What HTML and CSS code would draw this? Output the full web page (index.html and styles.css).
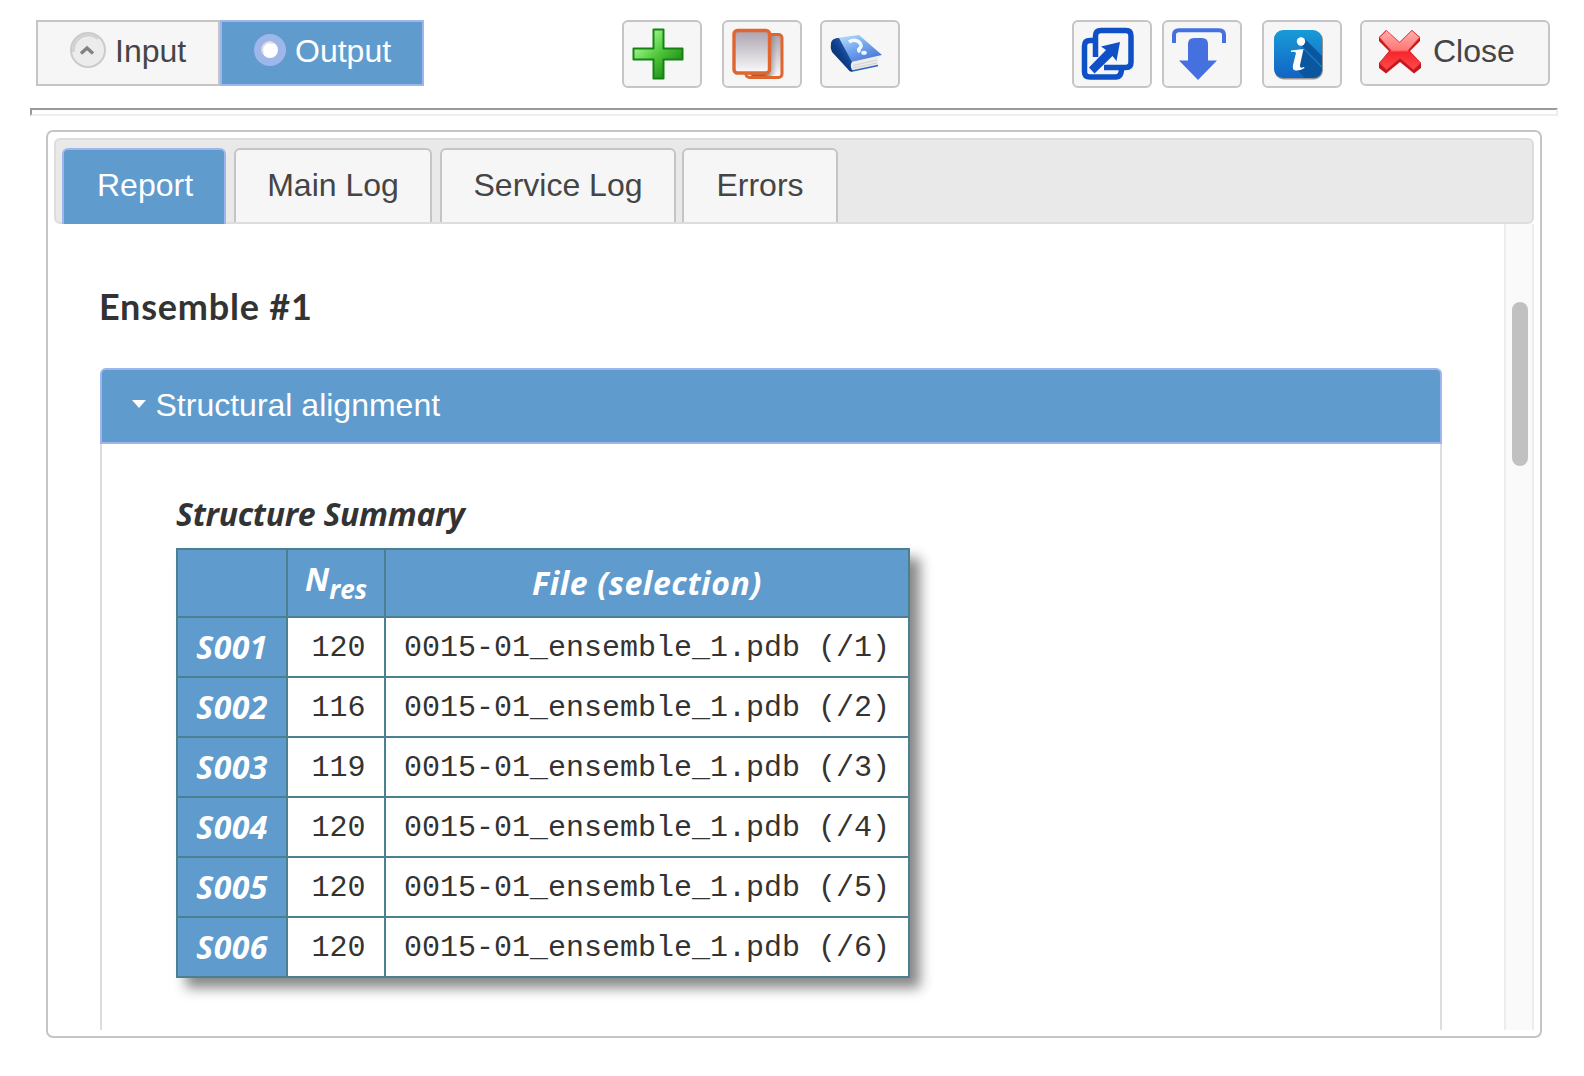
FILE: index.html
```html
<!DOCTYPE html>
<html lang="en">
<head>
<meta charset="utf-8">
<title>Job report</title>
<link rel="stylesheet" href="styles.css">
</head>
<body>
<header class="toolbar">
  <div class="switch">
    <button class="mode mode-input"><svg width="36" height="36" viewBox="0 0 36 36"><circle cx="18" cy="18" r="17" fill="#ececec" stroke="#cbcbcb" stroke-width="2"/><path d="M3.500 20A15 15 0 0 1 28 6.500" fill="none" stroke="#d2d2d2" stroke-width="3"/><path d="M11 21.500L17 16L23 21.500" fill="none" stroke="#828282" stroke-width="3.400"/></svg><span>Input</span></button>
    <button class="mode mode-output"><svg width="32" height="32" viewBox="0 0 32 32"><circle cx="16" cy="16" r="16" fill="#9fb6ea"/><circle cx="16" cy="16" r="8" fill="#fff"/><path d="M9 19A7.500 7.500 0 0 1 19 9" fill="none" stroke="#dedede" stroke-width="2"/></svg><span>Output</span></button>
  </div>
  <div class="group group-mid">
    <button class="tool"><svg width="76" height="64" viewBox="0 0 76 64"><defs><linearGradient id="plus" x1="0" y1="0" x2="1" y2="1"><stop offset=".15" stop-color="#a4ff92"/><stop offset=".5" stop-color="#50c63c"/><stop offset=".85" stop-color="#1b8a14"/></linearGradient></defs><path d="M29.500 7.500H39.500V26.500H58.500V37.500H39.500V56.500H29.500V37.500H9.500V26.500H29.500Z" fill="url(#plus)" stroke="#178114" stroke-width="2" stroke-linejoin="round"/></svg></button>
    <button class="tool"><svg width="76" height="64" viewBox="0 0 76 64"><defs><linearGradient id="sheet" x1="0" y1="0" x2="0" y2="1"><stop offset="0" stop-color="#aaa2ae"/><stop offset="1" stop-color="#fbfafc"/></linearGradient><linearGradient id="shade" x1="0" y1="0" x2="1" y2="0"><stop offset=".5" stop-color="#555" stop-opacity=".85"/><stop offset=".9" stop-color="#777" stop-opacity="0"/></linearGradient></defs><rect x="22" y="12.500" width="36" height="43" rx="3.500" fill="url(#sheet)" stroke="#e1652e" stroke-width="3"/><path d="M40 14H56V47Q52 53 47 54H28L25 52H40Z" fill="url(#shade)"/><rect x="10" y="8.500" width="35.500" height="42.500" rx="3.500" fill="url(#sheet)" stroke="#e1652e" stroke-width="3.400"/></svg></button>
    <button class="tool tool-help"><svg width="76" height="64" viewBox="0 0 76 64"><defs><linearGradient id="cover" x1="0" y1="0" x2=".7" y2="1"><stop offset="0" stop-color="#c0e4ff"/><stop offset=".5" stop-color="#78aaf0"/><stop offset="1" stop-color="#4977d6"/></linearGradient><linearGradient id="spine" x1="0" y1="1" x2="1" y2="0"><stop offset="0" stop-color="#0b214f"/><stop offset=".5" stop-color="#103f8c"/><stop offset="1" stop-color="#3d78c8"/></linearGradient></defs><path d="M28 40L58 34Q55 39 56 43L31 49Z" fill="#ececec"/><path d="M31 43.500L55 38M31 46L55 41" stroke="#c4c4c4" stroke-width=".7"/><path d="M29 49.300L56 43.500" stroke="#2f63b5" stroke-width="1.400"/><path d="M14 16L37 13L60 33L29 40Z" fill="url(#cover)"/><path d="M17 16Q10 16 9 21Q8 26 10 30L28 49.500L31 49Q27 44 30 40Z" fill="url(#spine)"/><path d="M27 20Q32 16.500 37 20Q41 24 37.500 26.500Q35.500 28 38 30" fill="none" stroke="#f3f9ff" stroke-width="3.500"/><ellipse cx="42" cy="30.800" rx="2.800" ry="2" fill="#f3f9ff"/></svg></button>
  </div>
  <div class="group group-right">
    <button class="tool"><svg width="76" height="64" viewBox="0 0 76 64"><g fill="none" stroke="#0f50c6" stroke-width="5.500"><path d="M21.500 35V14Q21.500 8.500 27 8.500H52Q57 8.500 57 14V40Q57 45.500 52 45.500H30"/><path d="M21 18.500H16Q10.500 18.500 10.500 24V50Q10.500 55 16 55H42Q47.500 55 47.500 46"/></g><path d="M15 45.500L32 28L27 24.500L46 20L42.500 39L38.500 34L20.500 51.500Z" fill="#0f50c6"/></svg></button>
    <button class="tool tool-download"><svg width="76" height="64" viewBox="0 0 76 64"><path d="M10 21V13Q10 8.200 15 8.200H55Q60 8.200 60 13V21" fill="none" stroke="#4570e0" stroke-width="4"/><path d="M24 22Q24 16 30 16H38Q44 16 44 22V38.500H53L34 58L15 38.500H24Z" fill="#4570e0"/></svg></button>
    <button class="tool tool-info"><svg width="76" height="64" viewBox="0 0 76 64"><defs><linearGradient id="info" x1="0" y1="0" x2="0" y2="1"><stop offset="0" stop-color="#189bd7"/><stop offset="1" stop-color="#1263c5"/></linearGradient></defs><rect x="10.500" y="9" width="48.500" height="48.500" rx="9" fill="#777" opacity=".75"/><rect x="10" y="8" width="48" height="48" rx="9" fill="url(#info)"/><path d="M41 17L58 34V48Q57 56 49 56H41L30 45Z" fill="#0b579f"/><path d="M38 25L58 45" stroke="#1680bd" stroke-width="1.200"/><circle cx="37" cy="19.500" r="4.200" fill="#fff"/><path d="M27 28.500L39.500 27L36 43Q35.500 47 40 45L40.500 46Q36 49 31.500 48.500Q28 48 29 43L32 31Q31 29 27 30Z" fill="#fff"/></svg></button>
    <button class="close"><svg width="44" height="46" viewBox="0 0 44 46"><defs><linearGradient id="cross" x1="0" y1="0" x2="0" y2="1"><stop offset="0" stop-color="#ffb0af"/><stop offset=".5" stop-color="#ff7675"/><stop offset=".56" stop-color="#f5262b"/><stop offset="1" stop-color="#ff4a4d"/></linearGradient></defs><path d="M1 8L8 1L21.500 13L34 1L42 8V12L32 22L43 34V39L36 44.500L22 33L8 44.500L1 39V34L11 22L1 12Z" fill="#c9161e"/><path d="M1.500 8.500L8.500 1.500L21.500 13.500L34 1.500L41.500 8.500L30 21.500L42.500 34L35.500 40.500L22 29L8.500 40.500L1.500 34L13 21.500Z" fill="url(#cross)" stroke="#e43d42" stroke-width=".7"/></svg><span>Close</span></button>
  </div>
</header>
<div class="rule"></div>
<main class="panel">
  <nav class="tabs">
    <a class="tab tab-report">Report</a>
    <a class="tab tab-main">Main Log</a>
    <a class="tab tab-service">Service Log</a>
    <a class="tab tab-errors">Errors</a>
  </nav>
  <div class="view">
    <div class="page">
      <h2 class="title">Ensemble #1</h2>
      <div class="section-head"><svg width="14" height="8" viewBox="0 0 14 8"><path d="M0 0H14L7 8Z" fill="#fff"/></svg><span>Structural alignment</span></div>
      <section class="section-body">
        <h3 class="caption">Structure Summary</h3>
        <table class="summary">
          <colgroup><col class="col-id"><col class="col-n"><col class="col-file"></colgroup>
          <tr class="head"><th></th><th class="nres">N<sub>res</sub></th><th class="file">File (selection)</th></tr>
          <tr><th>S001</th><td class="count">120</td><td>0015-01_ensemble_1.pdb (/1)</td></tr>
          <tr><th>S002</th><td class="count">116</td><td>0015-01_ensemble_1.pdb (/2)</td></tr>
          <tr><th>S003</th><td class="count">119</td><td>0015-01_ensemble_1.pdb (/3)</td></tr>
          <tr><th>S004</th><td class="count">120</td><td>0015-01_ensemble_1.pdb (/4)</td></tr>
          <tr><th>S005</th><td class="count">120</td><td>0015-01_ensemble_1.pdb (/5)</td></tr>
          <tr><th>S006</th><td class="count">120</td><td>0015-01_ensemble_1.pdb (/6)</td></tr>
        </table>
      </section>
    </div>
    <div class="track"><div class="thumb"></div></div>
  </div>
</main>
</body>
</html>
```
FILE: styles.css
```css
* { box-sizing: border-box; }
body {
  margin: 0;
  width: 1584px;
  height: 1076px;
  padding: 20px 26px 0 30px;
  overflow: hidden;
  background: #fff;
  color: #454545;
  font: 32px/36px "Liberation Sans", Arial, sans-serif;
}
svg { display: block; flex: none; }
button {
  margin: 0;
  padding: 0;
  font: inherit;
  color: inherit;
  background: #f6f6f6;
  border: 2px solid #c5c5c5;
}
.toolbar { display: flex; align-items: flex-start; height: 88px; padding-left: 6px; }
.switch, .group { display: flex; }
.mode { display: flex; align-items: flex-start; height: 66px; }
.mode span { padding-top: 11px; }
.mode-input { width: 184px; padding-left: 32px; gap: 9px; }
.mode-input svg { margin-top: 10px; }
.mode-output { width: 204px; padding-left: 32px; gap: 9px; background: #609bce; border-color: #9fb6ec; color: #fff; }
.mode-output svg { margin-top: 12px; }
.tool { width: 80px; height: 68px; border-radius: 6px; }
.group-mid { margin-left: 198px; gap: 20px; }
.tool-help { margin-left: -2px; }
.group-right { margin-left: 172px; }
.tool-download { margin-left: 10px; }
.tool-info { margin-left: 20px; }
.close { display: flex; width: 190px; height: 66px; margin-left: 18px; padding: 7px 0 0 16px; gap: 11px; border-radius: 6px; }
.close span { padding-top: 4px; }
.rule { width: 1528px; height: 8px; border: 2px solid; border-color: #9a9a9a #eee #eee #9a9a9a; }
.panel {
  width: 1496px;
  height: 908px;
  margin: 14px 0 0 16px;
  padding: 6px;
  border: 2px solid #c5c5c5;
  border-radius: 7px;
}
.tabs {
  display: flex;
  height: 86px;
  padding: 8px 6px 0;
  background: #e9e9e9;
  border: 2px solid #ddd;
  border-radius: 6px;
}
.tab {
  height: 74px;
  padding-top: 17px;
  text-align: center;
  background: #f6f6f6;
  border: 2px solid #c5c5c5;
  border-bottom: 0;
  border-radius: 6px 6px 0 0;
}
.tab-report { width: 164px; height: 76px; padding-left: 2px; background: #609bce; border-color: #9fb6ec; color: #fff; }
.tab-main { width: 198px; margin-left: 8px; }
.tab-service { width: 236px; margin-left: 8px; }
.tab-errors { width: 156px; margin-left: 6px; }
.view { display: flex; justify-content: space-between; height: 806px; }
.page { display: flex; flex-direction: column; width: 1388px; padding: 60px 0 0 46px; }
.title { margin: 0 0 0 -1px; height: 84px; color: #333; font: 700 36px/44px Lato, "Open Sans", sans-serif; letter-spacing: .8px; }
.caption, .summary th { font-family: "Open Sans", "Noto Sans", sans-serif; font-weight: 700; font-style: italic; font-size: 32px; }
.section-head {
  display: flex;
  gap: 9.5px;
  height: 76px;
  padding: 17px 0 0 30px;
  background: #609bce;
  border: 2px solid #9fb6ec;
  border-radius: 6px 6px 0 0;
  color: #fff;
}
.section-head svg { margin-top: 13px; }
.section-body { flex: 1; padding: 50px 0 0 74px; border: solid #ddd; border-width: 0 2px; }
.caption { margin: 0; height: 54px; color: #333; line-height: 40px; letter-spacing: -.3px; }
.summary {
  width: 734px;
  border-collapse: separate;
  border-spacing: 0;
  border: solid #4a8090;
  border-width: 2px 0 0 2px;
  table-layout: fixed;
  box-shadow: 10px 10px 12px #888;
}
.col-id { width: 110px; }
.col-n { width: 98px; }
.col-file { width: 524px; }
.summary th, .summary td { height: 60px; padding: 0; border: solid #4a8090; border-width: 0 2px 2px 0; text-align: center; white-space: nowrap; }
.summary th { padding-bottom: 1px; background: #609bce; color: #fff; letter-spacing: .4px; }
.summary .head th { height: 68px; }
.summary .nres { padding-bottom: 9px; letter-spacing: 0; }
.summary .file { letter-spacing: .6px; }
.summary td { padding-top: 2px; background: #fff; color: #333; font-family: "Liberation Mono", "Courier New", monospace; font-size: 30px; }
.summary .count { padding-left: 5px; }
.summary sub { font-size: 26px; line-height: 0; vertical-align: -8px; }
.track { width: 30px; padding: 78px 0 0 6px; background: #fafafa; border: solid; border-color: #e8e8e8 #ededed; border-width: 0 2px; }
.thumb { width: 16px; height: 164px; border-radius: 8px; background: #c1c1c1; }
```
